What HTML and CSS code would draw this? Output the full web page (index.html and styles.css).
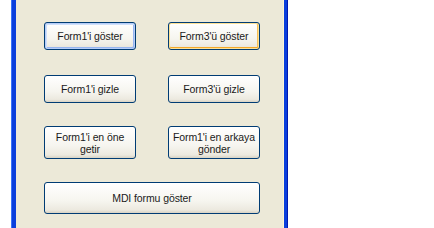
FILE: index.html
```html
<!DOCTYPE html>
<html>
<head>
  <meta charset='utf-8'>
  <title>MDI</title>
  <link rel="stylesheet" href="styles.css">
</head>
<body>
  <div class="frame">
    <div class="client">
      <div class="row row-1">
        <button class="btn focused">Form1'i göster</button>
        <button class="btn hot">Form3'ü göster</button>
      </div>
      <div class="row row-2">
        <button class="btn">Form1'i gizle</button>
        <button class="btn">Form3'ü gizle</button>
      </div>
      <div class="row row-3">
        <button class="btn">Form1'i en öne<br>getir</button>
        <button class="btn">Form1'i en arkaya<br>gönder</button>
      </div>
      <div class="row row-4">
        <button class="btn wide">MDI formu göster</button>
      </div>
    </div>
  </div>
</body>
</html>
```

FILE: styles.css
```css
body {
  margin: 0;
  background: #fff;
  font-family: "Liberation Sans", Arial, sans-serif;
}

/* window frame */
.frame {
  margin-left: 11px;
  width: 277px;
  height: 228px;
  box-sizing: border-box;
  border-left: 1px solid #3a74f8;
  border-right: 1px solid #0019b0;
  background: #0a3fdc;
  padding: 0 3px 0 4px;
}
.client {
  height: 100%;
  background: #ece9d8;
  border-right: 1px solid #fbf6d8;
  padding-left: 28px;
  box-sizing: border-box;
  overflow: hidden;
}

.row {
  display: flex;
  gap: 32px;
}
.row-1 { padding-top: 22px; }
.row-2 { margin-top: 25px; }
.row-3 { margin-top: 23px; }
.row-4 { margin-top: 23px; }

/* xp style buttons */
.btn {
  width: 92px;
  height: 28px;
  padding: 0;
  margin: 0;
  font-family: "Liberation Sans", Arial, sans-serif;
  font-size: 10.5px;
  line-height: 12px;
  letter-spacing: -0.1px;
  color: #1a1a1a;
  border: 1px solid #003c74;
  border-radius: 3px;
  background: linear-gradient(#ffffff 0%, #f6f5ef 60%, #ece9df 90%, #d8d3c4 100%);
  box-sizing: border-box;
}
.row-3 .btn { height: 33px; }
.row-4 .btn { height: 32px; }
.btn.wide {
  width: 216px;
}
.btn.focused {
  box-shadow: inset 0 0 0 1px #b6cdf8, inset 1px 1px 0 1px #cfe0fb, inset -1px -1px 0 1px #97b5f0;
}
.btn.hot {
  box-shadow: inset 0 0 0 1px #fde196, inset 0 -2px 0 0 #f4a92a, inset -1px 0 0 1px #f8c25a;
}
```
